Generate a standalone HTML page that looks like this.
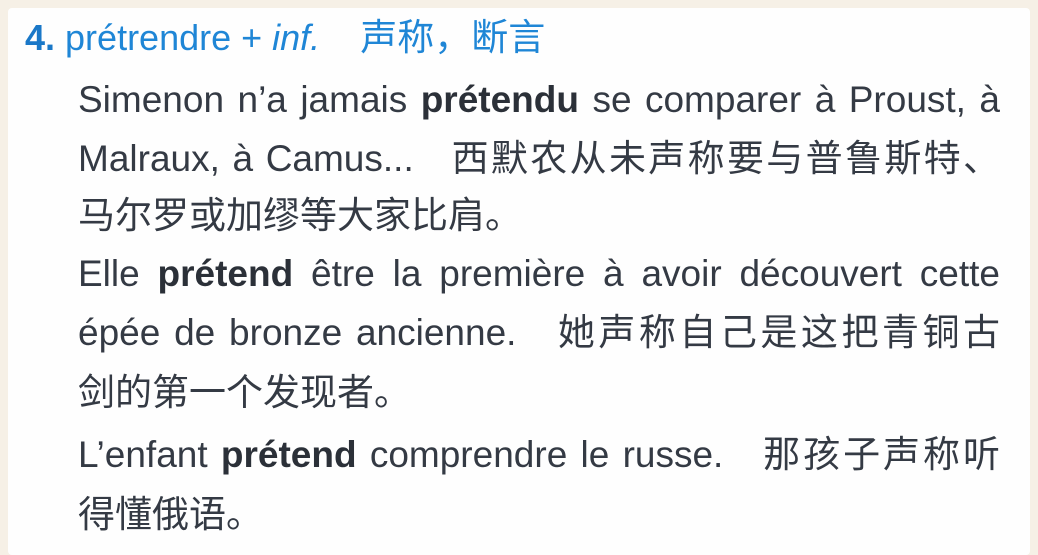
<!DOCTYPE html>
<html><head><meta charset="utf-8"><style>
html,body{margin:0;padding:0}
body{width:1038px;height:555px;background:#f6f0e6;position:relative;overflow:hidden;font-family:"Liberation Sans","Noto Sans CJK SC",sans-serif;}
.card{position:absolute;left:8px;top:8px;width:1022px;height:547px;background:#fefefe;border-radius:4px}
.l{position:absolute;left:78px;width:922px;font-size:37px;line-height:40px;color:#343a44;white-space:nowrap}
.j{text-align:justify;text-align-last:justify}
b{font-weight:bold;color:#2b3038}
.h{position:absolute;top:18px;left:25px;font-size:36px;line-height:40px;color:#1f86d6;white-space:nowrap}
</style></head><body>
<div class="card"></div>
<div class="h"><b style="color:#1a78c8">4.</b> prétrendre + <i>inf.</i>&nbsp;&nbsp;&nbsp;&nbsp;<span style="font-size:37px">声称，断言</span></div>
<div class="l j" style="top:80px">Simenon n’a jamais <b>prétendu</b> se comparer à Proust, à</div>
<div class="l j" style="top:139px">Malraux, à Camus...&nbsp;&nbsp;&nbsp;西默农从未声称要与普鲁斯特、</div>
<div class="l" style="top:196px">马尔罗或加缪等大家比肩。</div>
<div class="l j" style="top:254px">Elle <b>prétend</b> être la première à avoir découvert cette</div>
<div class="l j" style="top:313px">épée de bronze ancienne.&nbsp;&nbsp;&nbsp;她声称自己是这把青铜古</div>
<div class="l" style="top:373px">剑的第一个发现者。</div>
<div class="l j" style="top:435px">L’enfant <b>prétend</b> comprendre le russe.&nbsp;&nbsp;&nbsp;那孩子声称听</div>
<div class="l" style="top:495px">得懂俄语。</div>
</body></html>
